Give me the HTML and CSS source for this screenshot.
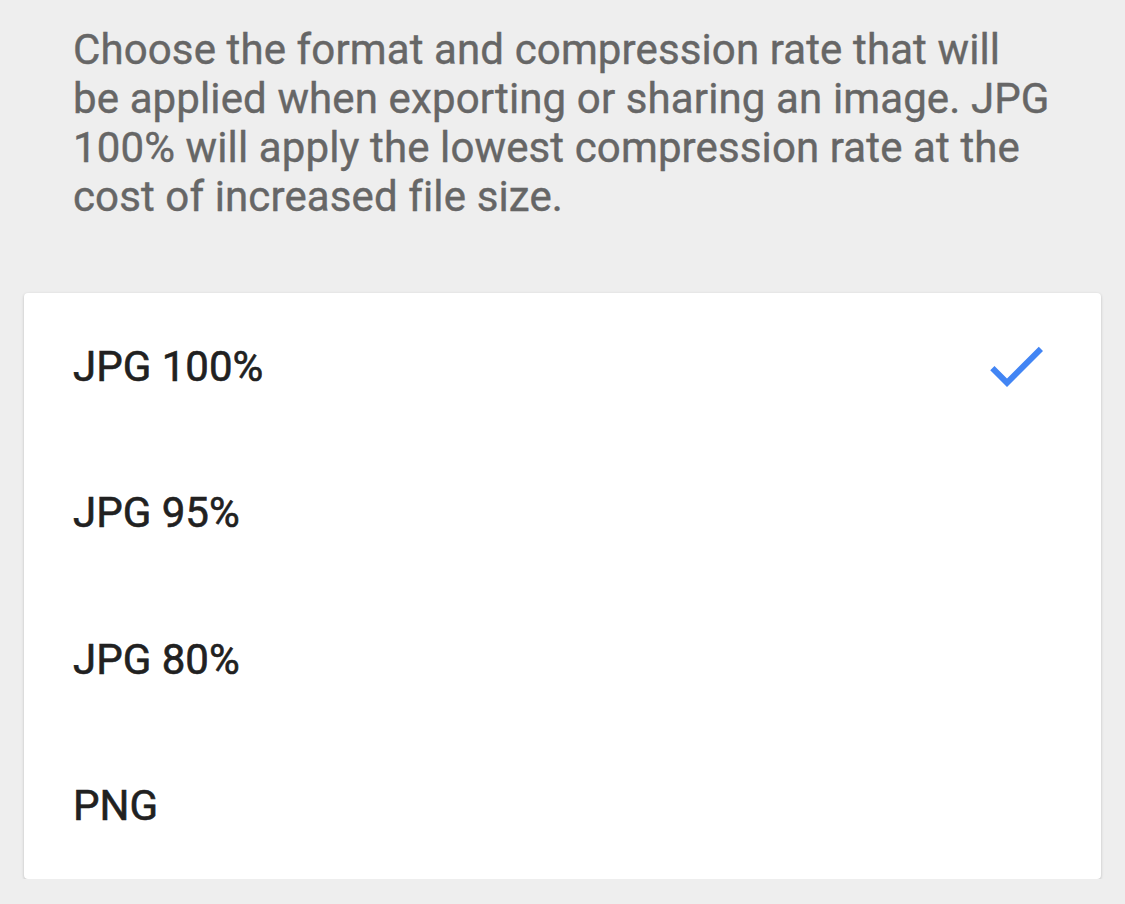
FILE: index.html
```html
<!DOCTYPE html>
<html>
<head>
<meta charset="utf-8">
<link rel="stylesheet" href="styles.css">
</head>
<body>
<div class="page">
  <p class="desc">Choose the format and compression rate that will<br>be applied when exporting or sharing an image. JPG<br>100% will apply the lowest compression rate at the<br>cost of increased file size.</p>
  <div class="card">
    <div class="row">
      <span class="label">JPG 100%</span>
      <svg class="check" viewBox="0 0 24 24" width="72" height="72"><path d="M9 16.17L4.83 12l-1.42 1.41L9 19 21 7l-1.41-1.41z" fill="#4285f4"/></svg>
    </div>
    <div class="row"><span class="label">JPG 95%</span></div>
    <div class="row"><span class="label">JPG 80%</span></div>
    <div class="row"><span class="label">PNG</span></div>
  </div>
</div>
</body>
</html>
```

FILE: styles.css
```css
html, body {
  margin: 0;
  padding: 0;
  background: #eeeeee;
}
.page {
  padding: 25px 24px 0 24px;
  font-family: Roboto, "Noto Sans", sans-serif;
}
.desc {
  margin: 0 0 72px 0;
  padding: 0 0 0 49px;
  font-size: 42px;
  line-height: 49px;
  letter-spacing: 0.12px;
  color: #666666;
  -webkit-text-stroke: 0.4px #666666;
  white-space: nowrap;
}
.card {
  background: #ffffff;
  border-radius: 4px;
  box-shadow: 0 1px 3px rgba(0,0,0,0.22);
  width: 1077px;
  margin-top: 1px;
}
.row {
  height: 146.5px;
  display: flex;
  align-items: center;
  justify-content: space-between;
  padding: 0 49px 0 49px;
  box-sizing: border-box;
}
.label {
  font-size: 42px;
  font-weight: 400;
  letter-spacing: 0;
  color: #212121;
  -webkit-text-stroke: 0.6px #212121;
}
.check {
  display: block;
}
```
